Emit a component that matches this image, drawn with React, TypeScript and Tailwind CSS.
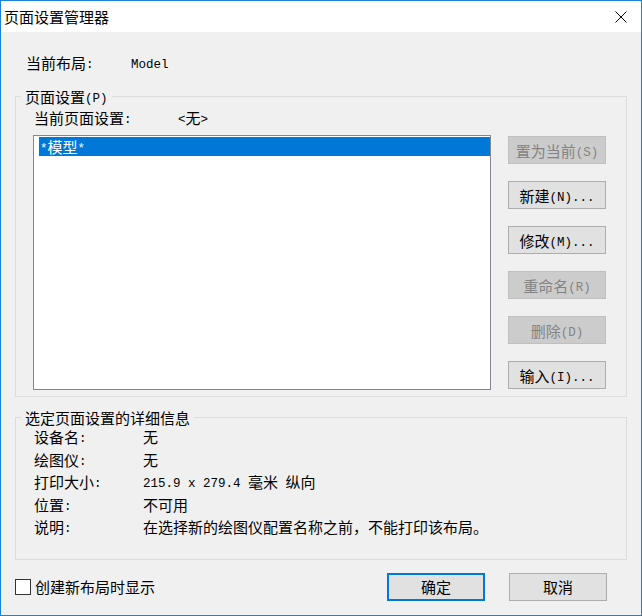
// Page setup manager dialog (Windows 10 look, 125% scaling)
const cjk = "font-['Noto_Sans_CJK_SC',sans-serif]";

// half-width Latin runs, as in the SimSun face of the original
function L({ children }: { children: React.ReactNode }) {
  return (
    <span className="font-['Liberation_Mono',monospace] text-[12.5px] leading-[0px] align-[1px]">
      {children}
    </span>
  );
}

const sideButtons = [
  { label: "置为当前", key: "(S)", more: "", disabled: true },
  { label: "新建", key: "(N)", more: "...", disabled: false },
  { label: "修改", key: "(M)", more: "...", disabled: false },
  { label: "重命名", key: "(R)", more: "", disabled: true },
  { label: "删除", key: "(D)", more: "", disabled: true },
  { label: "输入", key: "(I)", more: "...", disabled: false },
];

const details: { label: string; value: React.ReactNode }[] = [
  { label: "设备名:", value: "无" },
  { label: "绘图仪:", value: "无" },
  {
    label: "打印大小:",
    value: (
      <>
        <L>215.9 x 279.4 </L>毫米<L> </L>纵向
      </>
    ),
  },
  { label: "位置:", value: "不可用" },
  { label: "说明:", value: "在选择新的绘图仪配置名称之前，不能打印该布局。" },
];

export default function App() {
  return (
    <div
      className={`w-[642px] h-[616px] flex flex-col border border-[#1883d7] bg-[#f0f0f0] text-black text-[15px] leading-[17px] ${cjk}`}
    >
      {/* title bar */}
      <div className="h-[31px] shrink-0 bg-white flex items-center justify-between pl-[3px] pr-[14px]">
        <span className="text-[15px]">页面设置管理器</span>
        <svg width="12" height="12" viewBox="0 0 12 12" className="text-black">
          <path d="M0.5 0.5 L11.5 11.5 M11.5 0.5 L0.5 11.5" stroke="currentColor" strokeWidth="1" />
        </svg>
      </div>

      <div className="flex-1 flex flex-col pl-[14px] pr-[14px] pt-[22px]">
        <div className="flex ml-[11px] h-[17px]">
          <span className="w-[105px]">当前布局<L>:</L></span>
          <span>
            <L>Model</L>
          </span>
        </div>

        {/* page setups group */}
        <fieldset className="mt-[17px] border border-[#dcdcdc]">
          <legend className="ml-[5px] px-[4px] h-[17px]">
            页面设置<L>(P)</L>
          </legend>
          <div className="pl-[17px] pt-[4px] pb-[6px]">
            <div className="flex ml-[1px] h-[17px]">
              <span className="w-[144px]">当前页面设置<L>:</L></span>
              <span>
                <L>&lt;</L>无<L>&gt;</L>
              </span>
            </div>
            <div className="flex mt-[9px]">
              <div className="w-[458px] h-[255px] border border-[#828790] bg-white pl-[5px] pt-[1px]">
                <div className="h-[19px] bg-[#0078d7] text-white flex items-center pl-[1px]">
                  <span>
                    <L>*</L>模型<L>*</L>
                  </span>
                </div>
              </div>
              <div className="ml-[17px] pt-[1px] flex flex-col gap-[17px]">
                {sideButtons.map((b) => (
                  <div
                    key={b.key}
                    className={
                      b.disabled
                        ? "w-[98px] h-[28px] flex items-center justify-center border border-[#bfbfbf] bg-[#cccccc] text-[#838383]"
                        : "w-[98px] h-[28px] flex items-center justify-center border border-[#adadad] bg-[#e1e1e1]"
                    }
                  >
                    <span>
                      {b.label}
                      <L>
                        {b.key}
                        {b.more}
                      </L>
                    </span>
                  </div>
                ))}
              </div>
            </div>
          </div>
        </fieldset>

        {/* details group */}
        <fieldset className="mt-[12px] border border-[#dcdcdc]">
          <legend className="ml-[5px] px-[4px] h-[17px]">选定页面设置的详细信息</legend>
          <div className="pl-[18px] pb-[20px] grid grid-cols-[109px_1fr] auto-rows-[22.5px] leading-[22.5px]">
            {details.map((d) => (
              <div key={d.label} className="contents">
                <span>
                  {d.label.slice(0, -1)}
                  <L>:</L>
                </span>
                <span>{d.value}</span>
              </div>
            ))}
          </div>
        </fieldset>

        {/* footer */}
        <div className="mt-[13px] flex items-center justify-between">
          <div className="flex items-center gap-[4px]">
            <div className="w-[16px] h-[16px] border border-[#333333] bg-white" />
            <span>创建新布局时显示</span>
          </div>
          <div className="flex gap-[24px] mr-[20px]">
            <div className="w-[98px] h-[28px] flex items-center justify-center border-2 border-[#0078d7] bg-[#e1e1e1]">
              确定
            </div>
            <div className="w-[98px] h-[28px] flex items-center justify-center border border-[#adadad] bg-[#e1e1e1]">
              取消
            </div>
          </div>
        </div>
      </div>
    </div>
  );
}
